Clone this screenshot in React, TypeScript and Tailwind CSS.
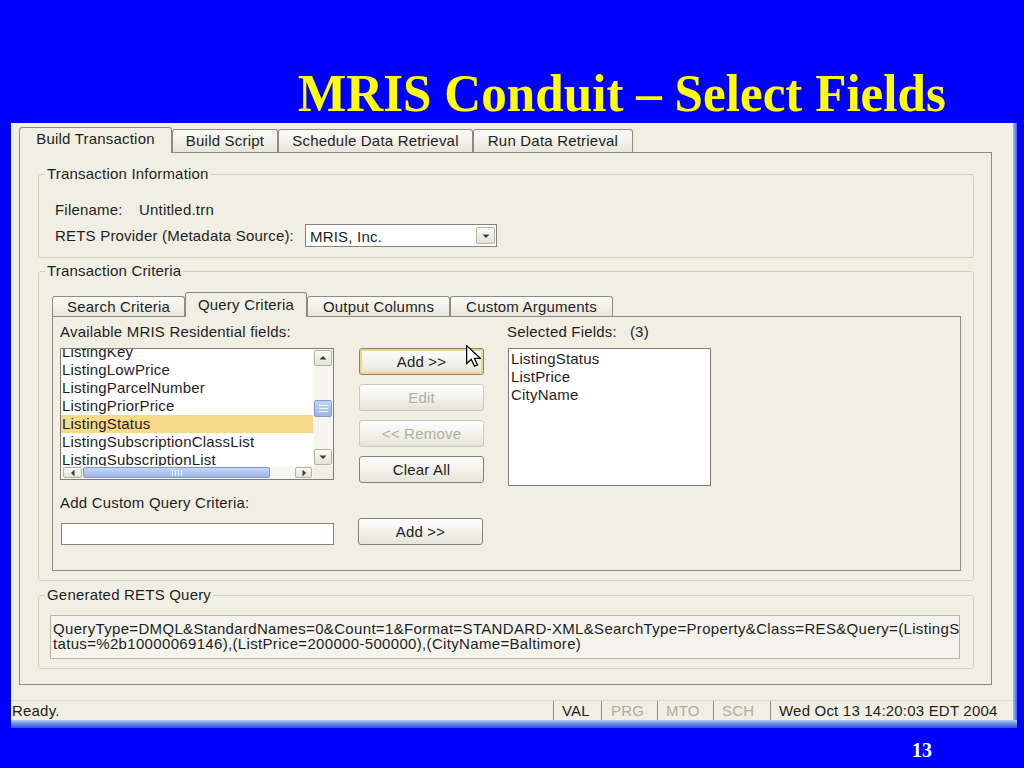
import React from 'react';

const AVAILABLE = [
  'ListingKey',
  'ListingLowPrice',
  'ListingParcelNumber',
  'ListingPriorPrice',
  'ListingStatus',
  'ListingSubscriptionClassList',
  'ListingSubscriptionList',
];

const SELECTED = ['ListingStatus', 'ListPrice', 'CityName'];

function Tab({ label, w, active, outer }: { label: string; w: string; active?: boolean; outer?: boolean }) {
  if (active) {
    return (
      <div
        className={`${w} ${outer ? 'h-[26px] pb-[4px]' : 'h-[25px]'} relative z-10 -mb-px flex items-center justify-center rounded-t-[3px] border border-b-0 border-[#8e8c80] bg-[#f1efe4]`}
      >
        {label}
      </div>
    );
  }
  return (
    <div
      className={`${w} ${outer ? 'h-[23px]' : 'h-[20px]'} flex items-center justify-center rounded-t-[3px] border border-b-0 border-[#8e8c80] bg-gradient-to-b from-[#fcfcf9] to-[#e7e5da]`}
    >
      {label}
    </div>
  );
}

function Group({ title, className, children }: { title: string; className?: string; children: React.ReactNode }) {
  return (
    <fieldset className={`rounded-[3px] border border-[#d0cfbf] ${className ?? ''}`}>
      <legend className="ml-[6px] h-[18px] px-[2px] leading-[18px]">{title}</legend>
      {children}
    </fieldset>
  );
}

function Arrow({ dir }: { dir: 'up' | 'down' | 'left' | 'right' }) {
  const pts = {
    up: '0.5,5.5 4,2 7.5,5.5',
    down: '0.5,2.5 4,6 7.5,2.5',
    left: '5.5,0.5 2,4 5.5,7.5',
    right: '2.5,0.5 6,4 2.5,7.5',
  }[dir];
  return (
    <svg width="8" height="8" viewBox="0 0 8 8">
      <polygon points={pts} fill="#3a3a3a" />
    </svg>
  );
}

const scrollBtn =
  'flex items-center justify-center rounded-[2px] border border-[#b4b2a4] bg-gradient-to-b from-[#fbfbf7] to-[#e4e2d6]';
const thumb = 'rounded-[2px] border border-[#7f9bd0] bg-gradient-to-b from-[#c6d5f4] to-[#9db5e5]';

function Btn({ children, disabled, focus }: { children: React.ReactNode; disabled?: boolean; focus?: boolean }) {
  return (
    <div
      className={`flex h-[27px] w-[125px] items-center justify-center rounded-[3px] border bg-gradient-to-b from-[#ffffff] to-[#e6e4d8] ${
        disabled ? 'border-[#cac8ba] text-[#b0ae9f]' : 'border-[#858272]'
      } ${focus ? 'shadow-[inset_0_0_0_2px_#f0d38f]' : ''}`}
    >
      {children}
    </div>
  );
}

export default function App() {
  return (
    <div className="relative h-[768px] w-[1024px] overflow-hidden bg-[#0000ff]">
      {/* slide title */}
      <div className="h-[118px] pl-[298px] pt-[67px]">
        <h1 className="origin-left scale-x-[0.965] whitespace-nowrap font-['Liberation_Serif','Times_New_Roman',serif] text-[53px] font-bold leading-none text-[#ffff00]">
          MRIS Conduit – Select Fields
        </h1>
      </div>

      {/* app window */}
      <div className="ml-[11px] mt-[5px] flex w-[1006px]">
        <div className="h-[597px] w-[1002px] bg-[#f1efe4] font-['Liberation_Sans',Arial,sans-serif] text-[15px] leading-[18px] tracking-[0.2px] text-[#1e1e1e]">
          {/* outer tabs */}
          <div className="mt-[4px] flex h-[25px] items-end pl-[8px]">
            <Tab outer active w="w-[153px]" label="Build Transaction" />
            <Tab outer w="w-[106px]" label="Build Script" />
            <Tab outer w="w-[195px]" label="Schedule Data Retrieval" />
            <Tab outer w="w-[160px]" label="Run Data Retrieval" />
          </div>

          <div className="ml-[8px] w-[973px] border border-[#8e8c80] pb-[15px] pl-[18px] pr-[17px] pt-[12px]">
            <Group title="Transaction Information">
              <div className="pb-[10px] pl-[16px] pt-[18px]">
                <div className="flex h-[18px] items-center">
                  <span className="w-[84px]">Filename:</span>
                  <span>Untitled.trn</span>
                </div>
                <div className="mt-[5px] flex h-[23px] items-center">
                  <span className="w-[250px]">RETS Provider (Metadata Source):</span>
                  <div className="flex h-[23px] w-[192px] items-center justify-between border border-[#85837a] bg-white pl-[4px] pr-[1px]">
                    <span className="mt-[2px]">MRIS, Inc.</span>
                    <div className={`${scrollBtn} h-[17px] w-[19px] border-[#8e8c80]`}>
                      <Arrow dir="down" />
                    </div>
                  </div>
                </div>
              </div>
            </Group>

            <Group title="Transaction Criteria" className="mt-[4px]">
              <div className="pb-[9px] pl-[13px] pr-[12px] pt-[12px]">
                {/* inner tabs */}
                <div className="flex h-[24px] items-end">
                  <Tab w="w-[133px]" label="Search Criteria" />
                  <Tab active w="w-[122px]" label="Query Criteria" />
                  <Tab w="w-[143px]" label="Output Columns" />
                  <Tab w="w-[163px]" label="Custom Arguments" />
                </div>
                <div className="h-[255px] border border-[#8e8c80] pl-[7px] pt-[6px]">
                  <div className="flex h-[18px] items-center">
                    <span className="w-[447px]">Available MRIS Residential fields:</span>
                    <span>Selected Fields:</span>
                    <span className="ml-[13px]">(3)</span>
                  </div>

                  <div className="mt-[7px] flex items-start">
                    {/* available fields list */}
                    <div className="flex h-[132px] w-[274px] flex-col border border-[#7f7d72] bg-white">
                      <div className="flex min-h-0 flex-1">
                        <div className="flex-1 overflow-hidden">
                          <div className="-mt-[6px]">
                            {AVAILABLE.map((f) => (
                              <div
                                key={f}
                                className={`h-[18px] whitespace-nowrap pl-[1px] leading-[18px] ${
                                  f === 'ListingStatus' ? 'bg-[#f7d98b]' : ''
                                }`}
                              >
                                {f}
                              </div>
                            ))}
                          </div>
                        </div>
                        <div className="flex w-[20px] flex-col items-center bg-[#f6f5f0]">
                          <div className={`${scrollBtn} mt-[1px] h-[16px] w-[18px]`}>
                            <Arrow dir="up" />
                          </div>
                          <div className="h-[34px]" />
                          <div className={`${thumb} flex h-[17px] w-[18px] flex-col items-center justify-center gap-[2px]`}>
                            <div className="h-px w-[9px] bg-[#eef3fd]" />
                            <div className="h-px w-[9px] bg-[#eef3fd]" />
                            <div className="h-px w-[9px] bg-[#eef3fd]" />
                          </div>
                          <div className="flex-1" />
                          <div className={`${scrollBtn} mb-[1px] h-[16px] w-[18px]`}>
                            <Arrow dir="down" />
                          </div>
                        </div>
                      </div>
                      <div className="flex h-[13px]">
                        <div className="flex flex-1 items-center bg-[#f6f5f0]">
                          <div className={`${scrollBtn} ml-[2px] h-[11px] w-[19px]`}>
                            <Arrow dir="left" />
                          </div>
                          <div className={`${thumb} ml-[1px] flex h-[11px] w-[187px] items-center justify-center gap-[2px]`}>
                            <div className="h-[6px] w-px bg-[#eef3fd]" />
                            <div className="h-[6px] w-px bg-[#eef3fd]" />
                            <div className="h-[6px] w-px bg-[#eef3fd]" />
                            <div className="h-[6px] w-px bg-[#eef3fd]" />
                          </div>
                          <div className="flex-1" />
                          <div className={`${scrollBtn} mr-[1px] h-[11px] w-[17px]`}>
                            <Arrow dir="right" />
                          </div>
                        </div>
                        <div className="w-[20px] bg-[#f1efe4]" />
                      </div>
                    </div>

                    {/* buttons */}
                    <div className="ml-[25px] flex flex-col gap-[9px]">
                      <Btn focus>Add &gt;&gt;</Btn>
                      <Btn disabled>Edit</Btn>
                      <Btn disabled>&lt;&lt; Remove</Btn>
                      <Btn>Clear All</Btn>
                    </div>

                    {/* selected fields */}
                    <div className="ml-[24px] h-[138px] w-[203px] border border-[#7f7d72] bg-white pl-[2px] pt-[1px]">
                      {SELECTED.map((f) => (
                        <div key={f} className="h-[18px] leading-[18px]">
                          {f}
                        </div>
                      ))}
                    </div>
                  </div>

                  <div className="mt-[8px] flex h-[18px] items-center">Add Custom Query Criteria:</div>
                  <div className="mt-[6px] flex items-end">
                    <div className="ml-[1px] h-[22px] w-[273px] border border-[#85837a] bg-white" />
                    <div className="ml-[24px]">
                      <Btn>Add &gt;&gt;</Btn>
                    </div>
                  </div>
                </div>
              </div>
            </Group>

            <Group title="Generated RETS Query" className="mt-[5px]">
              <div className="pb-[9px] pl-[11px] pr-[12px] pt-[11px]">
                <div className="h-[44px] w-[910px] whitespace-nowrap border border-[#b5b3a6] bg-[#f4f3ec] pl-[2px] pt-[5px] leading-[15px] tracking-[0.33px]">
                  <div>
                    QueryType=DMQL&amp;StandardNames=0&amp;Count=1&amp;Format=STANDARD-XML&amp;SearchType=Property&amp;Class=RES&amp;Query=(ListingS
                  </div>
                  <div>tatus=%2b10000069146),(ListPrice=200000-500000),(CityName=Baltimore)</div>
                </div>
              </div>
            </Group>
          </div>

          {/* status bar */}
          <div className="mt-[15px] flex h-[20px] items-stretch border-t border-[#dddbd0]">
            <div className="flex flex-1 items-center pl-px">Ready.</div>
            <div className="flex w-[48px] items-center border-l border-[#8d8b7f] pl-[8px]">VAL</div>
            <div className="flex w-[56px] items-center border-l border-[#8d8b7f] pl-[9px] text-[#aeac9e]">PRG</div>
            <div className="flex w-[56px] items-center border-l border-[#8d8b7f] pl-[8px] text-[#aeac9e]">MTO</div>
            <div className="flex w-[57px] items-center border-l border-[#8d8b7f] pl-[8px] text-[#aeac9e]">SCH</div>
            <div className="mr-[2px] flex w-[241px] items-center border-l border-[#8d8b7f] pl-[8px]">
              Wed Oct 13 14:20:03 EDT 2004
            </div>
          </div>
        </div>
        <div className="w-[4px] bg-gradient-to-r from-[#a3bff2] to-[#3a6ad9]" />
      </div>
      <div className="ml-[11px] h-[8px] w-[1006px] bg-gradient-to-b from-[#b3cbf3] via-[#5f8ce1] to-[#2a55d2]" />

      {/* page number */}
      <div className="ml-[912px] mt-[12px] font-['Liberation_Serif','Times_New_Roman',serif] text-[20px] font-bold leading-none text-white">
        13
      </div>

      {/* mouse pointer */}
      <svg
        className="absolute left-[466px] top-[345px]"
        width="15"
        height="22"
        viewBox="0 0 12 19"
        preserveAspectRatio="none"
      >
        <path d="M0.5 0.5 L0.5 16 L4.2 12.4 L6.8 18.3 L9.2 17.3 L6.7 11.5 L11.5 11.5 Z" fill="#ffffff" stroke="#000000" strokeWidth="1" strokeLinejoin="miter" />
      </svg>
    </div>
  );
}
